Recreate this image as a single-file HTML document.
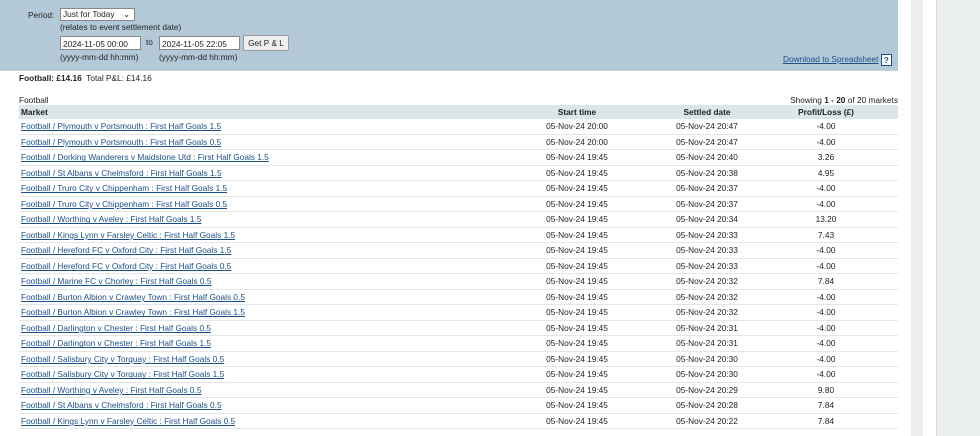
<!DOCTYPE html>
<html><head><style>
body{margin:0;width:980px;height:436px;overflow:hidden;background:#fff;font-family:"Liberation Sans",Tahoma,sans-serif;font-size:8.3px;color:#222;position:relative}
.panel{position:absolute;left:0;top:0;width:898px;height:70px;background:#b3c9d8;border-bottom:1px solid #c6d4de}
.g1{position:absolute;left:911px;top:0;width:12px;height:436px;background:#efefef}
.g2{position:absolute;left:936px;top:0;width:44px;height:436px;background:#edf0f0;border-left:1px solid #d8dcdc}
.abs{position:absolute;white-space:nowrap}
.inp{position:absolute;height:14px;border:1px solid #888;background:#fff;font-size:8.3px;line-height:14px;padding-left:2px;box-sizing:border-box}
.btn{position:absolute;height:16px;border:1px solid #999;background:#efefef;border-radius:2px;font-size:8.3px;line-height:14px;text-align:center;box-sizing:border-box}
a{color:#1a4f8a;text-decoration:underline}
table{position:absolute;left:19px;top:105px;width:879px;border-collapse:collapse}
th{background:#dae6ea;height:14px;font-weight:bold;padding:0;text-align:center}
th:first-child,td:first-child{text-align:left;padding-left:2px}
td{height:14.5px;padding:0;border-bottom:1px solid #e2e6e8;text-align:center}
</style></head><body>
<div class="panel"></div>
<div class="g1"></div><div class="g2"></div>
<div class="abs" style="left:28px;top:10px">Period:</div>
<div class="inp" style="left:60px;top:8px;width:75px;height:13px;line-height:11px">Just for Today <span style="position:absolute;right:4px">&#8964;</span></div>
<div class="abs" style="left:60px;top:22px">(relates to event settlement date)</div>
<div class="inp" style="left:60px;top:36px;width:81px">2024-11-05 00:00</div>
<div class="abs" style="left:146px;top:37px">to</div>
<div class="inp" style="left:159px;top:36px;width:81px">2024-11-05 22:05</div>
<div class="btn" style="left:243px;top:35px;width:46px">Get P &amp; L</div>
<div class="abs" style="left:60px;top:52px">(yyyy-mm-dd hh:mm)</div>
<div class="abs" style="left:159px;top:52px">(yyyy-mm-dd hh:mm)</div>
<div class="abs" style="left:783px;top:54px"><a>Download to Spreadsheet</a> <span style="display:inline-block;width:9px;height:10px;border:1px solid #1a4f8a;background:#fff;color:#1a4f8a;font-weight:bold;text-align:center;line-height:10px;vertical-align:middle">?</span></div>
<div class="abs" style="left:19px;top:73px"><b>Football: £14.16</b>&nbsp; Total P&amp;L: £14.16</div>
<div class="abs" style="left:19px;top:95px">Football</div>
<div class="abs" style="right:82px;top:95px">Showing <b>1 - 20</b> of 20 markets</div>
<table>
<colgroup><col style="width:475px"><col style="width:166px"><col style="width:94px"><col></colgroup>
<tr><th>Market</th><th>Start time</th><th>Settled date</th><th>Profit/Loss (£)</th></tr>
<tr><td><a>Football / Plymouth v Portsmouth : First Half Goals 1.5</a></td><td>05-Nov-24 20:00</td><td>05-Nov-24 20:47</td><td>-4.00</td></tr>
<tr><td><a>Football / Plymouth v Portsmouth : First Half Goals 0.5</a></td><td>05-Nov-24 20:00</td><td>05-Nov-24 20:47</td><td>-4.00</td></tr>
<tr><td><a>Football / Dorking Wanderers v Maidstone Utd : First Half Goals 1.5</a></td><td>05-Nov-24 19:45</td><td>05-Nov-24 20:40</td><td>3.26</td></tr>
<tr><td><a>Football / St Albans v Chelmsford : First Half Goals 1.5</a></td><td>05-Nov-24 19:45</td><td>05-Nov-24 20:38</td><td>4.95</td></tr>
<tr><td><a>Football / Truro City v Chippenham : First Half Goals 1.5</a></td><td>05-Nov-24 19:45</td><td>05-Nov-24 20:37</td><td>-4.00</td></tr>
<tr><td><a>Football / Truro City v Chippenham : First Half Goals 0.5</a></td><td>05-Nov-24 19:45</td><td>05-Nov-24 20:37</td><td>-4.00</td></tr>
<tr><td><a>Football / Worthing v Aveley : First Half Goals 1.5</a></td><td>05-Nov-24 19:45</td><td>05-Nov-24 20:34</td><td>13.20</td></tr>
<tr><td><a>Football / Kings Lynn v Farsley Celtic : First Half Goals 1.5</a></td><td>05-Nov-24 19:45</td><td>05-Nov-24 20:33</td><td>7.43</td></tr>
<tr><td><a>Football / Hereford FC v Oxford City : First Half Goals 1.5</a></td><td>05-Nov-24 19:45</td><td>05-Nov-24 20:33</td><td>-4.00</td></tr>
<tr><td><a>Football / Hereford FC v Oxford City : First Half Goals 0.5</a></td><td>05-Nov-24 19:45</td><td>05-Nov-24 20:33</td><td>-4.00</td></tr>
<tr><td><a>Football / Marine FC v Chorley : First Half Goals 0.5</a></td><td>05-Nov-24 19:45</td><td>05-Nov-24 20:32</td><td>7.84</td></tr>
<tr><td><a>Football / Burton Albion v Crawley Town : First Half Goals 0.5</a></td><td>05-Nov-24 19:45</td><td>05-Nov-24 20:32</td><td>-4.00</td></tr>
<tr><td><a>Football / Burton Albion v Crawley Town : First Half Goals 1.5</a></td><td>05-Nov-24 19:45</td><td>05-Nov-24 20:32</td><td>-4.00</td></tr>
<tr><td><a>Football / Darlington v Chester : First Half Goals 0.5</a></td><td>05-Nov-24 19:45</td><td>05-Nov-24 20:31</td><td>-4.00</td></tr>
<tr><td><a>Football / Darlington v Chester : First Half Goals 1.5</a></td><td>05-Nov-24 19:45</td><td>05-Nov-24 20:31</td><td>-4.00</td></tr>
<tr><td><a>Football / Salisbury City v Torquay : First Half Goals 0.5</a></td><td>05-Nov-24 19:45</td><td>05-Nov-24 20:30</td><td>-4.00</td></tr>
<tr><td><a>Football / Salisbury City v Torquay : First Half Goals 1.5</a></td><td>05-Nov-24 19:45</td><td>05-Nov-24 20:30</td><td>-4.00</td></tr>
<tr><td><a>Football / Worthing v Aveley : First Half Goals 0.5</a></td><td>05-Nov-24 19:45</td><td>05-Nov-24 20:29</td><td>9.80</td></tr>
<tr><td><a>Football / St Albans v Chelmsford : First Half Goals 0.5</a></td><td>05-Nov-24 19:45</td><td>05-Nov-24 20:28</td><td>7.84</td></tr>
<tr><td><a>Football / Kings Lynn v Farsley Celtic : First Half Goals 0.5</a></td><td>05-Nov-24 19:45</td><td>05-Nov-24 20:22</td><td>7.84</td></tr>
</table>
</body></html>
